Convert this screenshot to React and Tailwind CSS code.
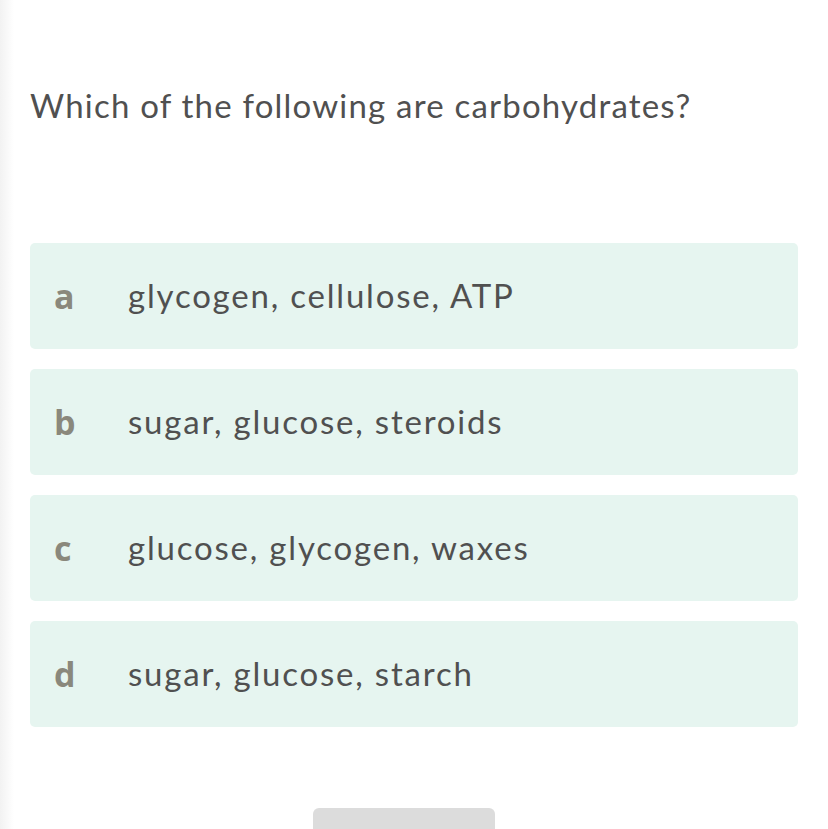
import React from 'react';

const options = [
    { letter: 'a', text: 'glycogen, cellulose, ATP' },
    { letter: 'b', text: 'sugar, glucose, steroids' },
    { letter: 'c', text: 'glucose, glycogen, waxes' },
    { letter: 'd', text: 'sugar, glucose, starch' },
];

const Option = ({ letter, text }) => (
    <div className="flex h-[106px] items-center rounded-[5px] bg-[#e6f5f0]">
        <span
            className="w-[98px] pl-[24px] text-[34px] font-bold text-[#8a887c]"
            style={{ fontFamily: '"Open Sans", sans-serif' }}
        >
            {letter}
        </span>
        <span className="text-[33px] tracking-[1.8px] text-[#505050]">{text}</span>
    </div>
);

const App = () => {
    return (
        <div
            className="relative h-[829px] w-[828px] overflow-hidden bg-white"
            style={{ fontFamily: 'Lato, "Open Sans", sans-serif' }}
        >
            <div className="absolute left-0 top-0 h-full w-[14px] bg-gradient-to-r from-[#f2f2f2] to-white" />
            <div className="relative px-[30px]">
                <h1 className="pt-[84px] text-[33px] leading-[42px] tracking-[1.2px] text-[#505050]">
                    Which of the following are carbohydrates?
                </h1>
                <div className="mt-[117px] flex flex-col gap-[20px]">
                    {options.map((o) => (
                        <Option key={o.letter} {...o} />
                    ))}
                </div>
                <div className="mt-[81px] flex justify-center">
                    <div className="ml-[-20px] h-[30px] w-[182px] rounded-t-[6px] bg-[#dcdcdc]" />
                </div>
            </div>
        </div>
    );
};

export default App;
